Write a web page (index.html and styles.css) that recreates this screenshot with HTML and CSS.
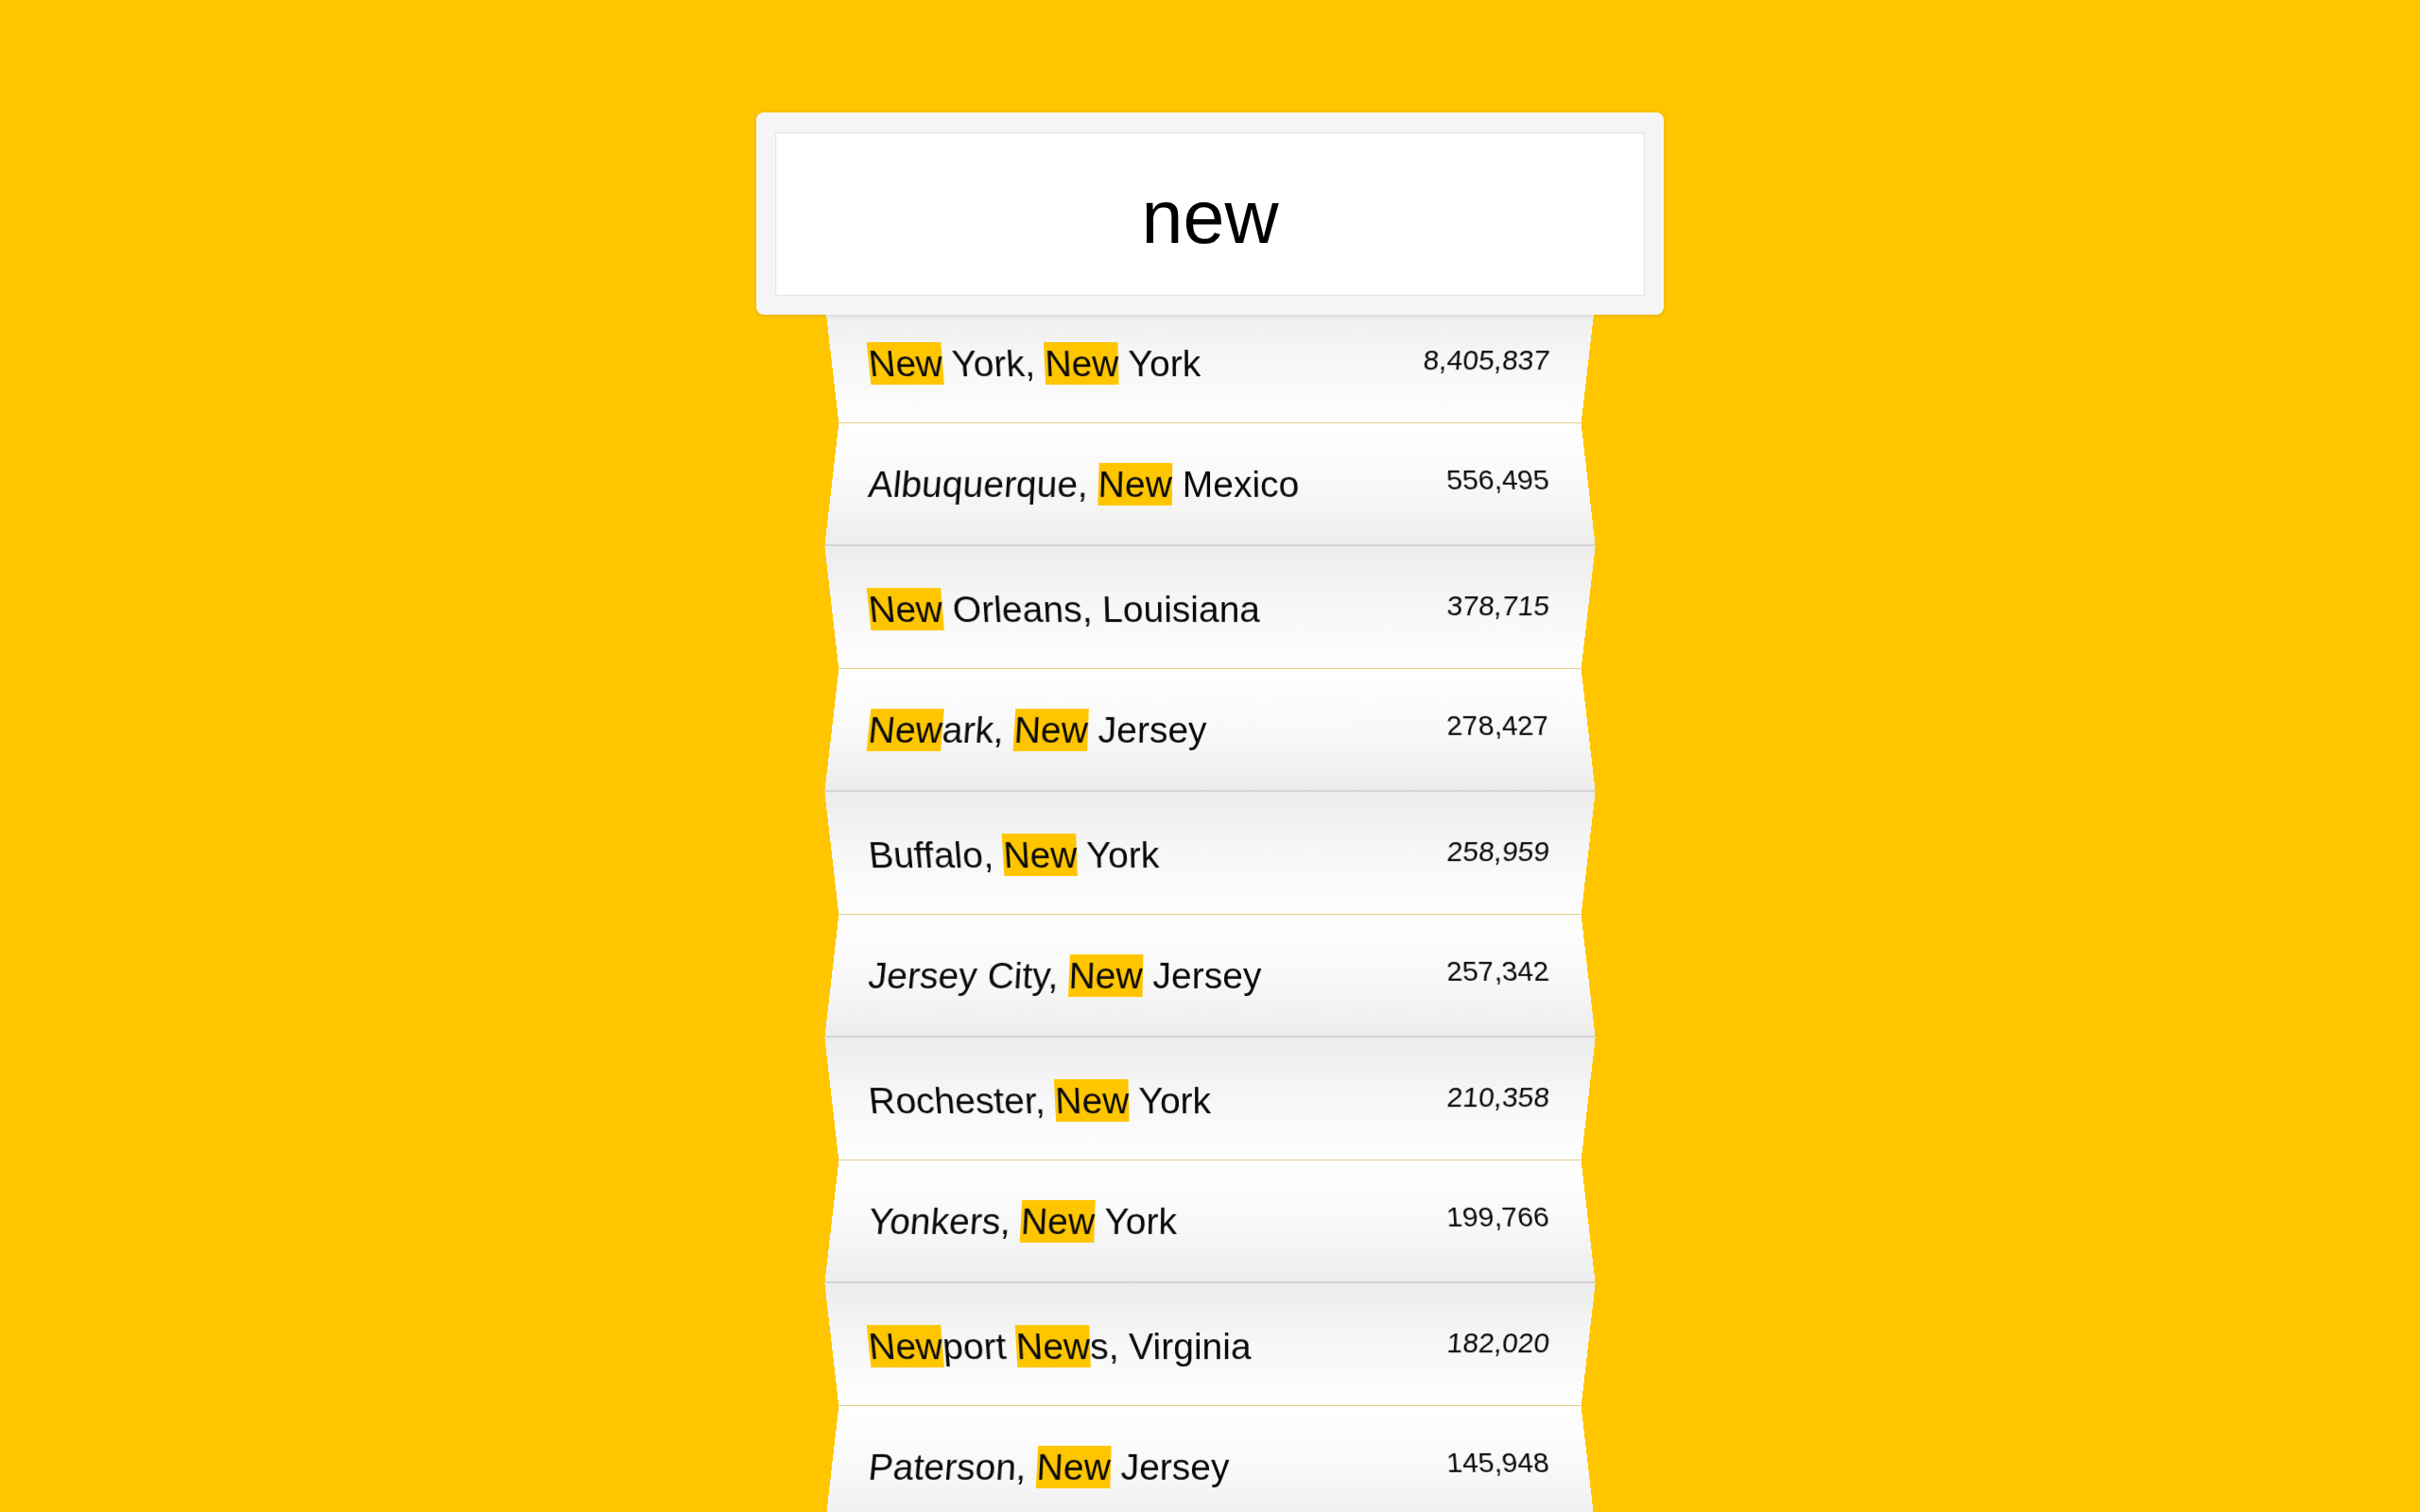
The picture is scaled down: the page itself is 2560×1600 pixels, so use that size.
FILE: index.html
```html
<!DOCTYPE html>
<html lang="en">
<head>
<meta charset="utf-8">
<title>City search</title>
<link rel="stylesheet" href="styles.css">
</head>
<body>
<main class="app">
  <div class="search">
    <div class="query">new</div>
  </div>
  <ul class="results">
    <li class="row"><span class="name"><mark>New</mark> York, <mark>New</mark> York</span><span class="pop">8,405,837</span></li>
    <li class="row"><span class="name">Albuquerque, <mark>New</mark> Mexico</span><span class="pop">556,495</span></li>
    <li class="row"><span class="name"><mark>New</mark> Orleans, Louisiana</span><span class="pop">378,715</span></li>
    <li class="row"><span class="name"><mark>New</mark>ark, <mark>New</mark> Jersey</span><span class="pop">278,427</span></li>
    <li class="row"><span class="name">Buffalo, <mark>New</mark> York</span><span class="pop">258,959</span></li>
    <li class="row"><span class="name">Jersey City, <mark>New</mark> Jersey</span><span class="pop">257,342</span></li>
    <li class="row"><span class="name">Rochester, <mark>New</mark> York</span><span class="pop">210,358</span></li>
    <li class="row"><span class="name">Yonkers, <mark>New</mark> York</span><span class="pop">199,766</span></li>
    <li class="row"><span class="name"><mark>New</mark>port <mark>New</mark>s, Virginia</span><span class="pop">182,020</span></li>
    <li class="row"><span class="name">Paterson, <mark>New</mark> Jersey</span><span class="pop">145,948</span></li>
  </ul>
</main>
</body>
</html>
```
FILE: styles.css
```css
html, body {
  margin: 0;
  padding: 0;
  height: 100%;
  overflow: hidden;
}
body {
  background: #ffc600;
  font-family: "Liberation Sans", Arial, Helvetica, sans-serif;
  color: #0a0a0a;
}
.app {
  width: 960px;
  margin: 119px auto 0;
}
.search {
  position: relative;
  z-index: 5;
  background: #f5f5f5;
  border-radius: 8px;
  padding: 21px 20px 20px;
  box-shadow: 0 1px 5px rgba(0, 0, 0, 0.12);
}
.query {
  height: 173px;
  box-sizing: border-box;
  background: #fff;
  border: 1px solid #e6e6e6;
  box-shadow: inset 0 1px 3px rgba(0, 0, 0, 0.06);
  display: flex;
  align-items: center;
  justify-content: center;
  font-size: 79px;
  color: #000;
  padding-top: 6px;
}
.results {
  list-style: none;
  margin: -15px auto 0;
  padding: 0;
  width: 800px;
}
.row {
  height: 130px;
  box-sizing: border-box;
  display: flex;
  align-items: center;
  justify-content: space-between;
  padding: 0 41px 0 39px;
  backface-visibility: hidden;
}
.row:nth-child(odd) {
  transform: translateY(1.22px) perspective(2000px) rotateX(-30deg) scaleY(1.1547);
  background: linear-gradient(to bottom, #ececec 0%, #f6f6f6 45%, #fefefe 100%);
  border-bottom: 1px solid #e2cc80;
}
.row:nth-child(even) {
  transform: translateY(-1.22px) perspective(2000px) rotateX(30deg) scaleY(1.1547);
  background: linear-gradient(to bottom, #ffffff 0%, #f8f8f8 55%, #ededed 100%);
  border-bottom: 2px solid #d6d6d6;
}
.name {
  font-size: 39px;
  white-space: nowrap;
  padding-top: 3px;
}
mark {
  background: #ffc600;
  color: inherit;
  padding: 1px 0;
}
.pop {
  font-size: 30px;
  margin-bottom: 6px;
}
```
